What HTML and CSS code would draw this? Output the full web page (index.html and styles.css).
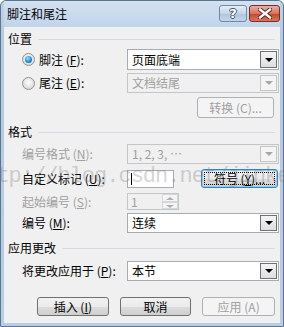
FILE: index.html
```html
<!DOCTYPE html>
<html lang="zh-CN">
<head>
  <meta charset="UTF-8" />
  <title>脚注和尾注</title>
  <link rel="stylesheet" href="styles.css">
</head>
<body>

  <div class="window">
    <div class="titlebar">
      <span class="title">脚注和尾注</span>
      <div class="caption-btns">
        <span class="cap help">?</span>
        <span class="cap close">
          <svg width="14" height="11" viewBox="0 0 14 11">
            <path d="M2 1.5 L12 9.5 M12 1.5 L2 9.5" stroke="#5a1d12" stroke-width="4.2" stroke-linecap="square"/>
            <path d="M2 1.5 L12 9.5 M12 1.5 L2 9.5" stroke="#fff" stroke-width="2.4" stroke-linecap="square"/>
          </svg>
        </span>
      </div>
    </div>

    <div class="client">
      <!-- 位置 -->
      <div class="group-head"><span>位置</span><i></i></div>

      <div class="row row-first">
        <label class="radio"><span class="dot checked"></span>脚注 (<u>F</u>):</label>
        <div class="combo"><span class="value">页面底端</span><span class="drop"></span></div>
      </div>

      <div class="row row-second">
        <label class="radio"><span class="dot"></span>尾注 (<u>E</u>):</label>
        <div class="combo disabled"><span class="value">文档结尾</span><span class="drop"></span></div>
      </div>

      <div class="btn-row">
        <span class="btn disabled btn-wide">转换 (C)...</span>
      </div>

      <!-- 格式 -->
      <div class="group-head head-format"><span>格式</span><i></i></div>

      <div class="row row-numfmt">
        <label class="muted">编号格式 (<u>N</u>):</label>
        <div class="combo disabled"><span class="value">1, 2, 3, …</span><span class="drop"></span></div>
      </div>

      <div class="row row-custom">
        <label>自定义标记 (<u>U</u>):</label>
        <div class="custom-line">
          <div class="textbox"><span class="caret"></span></div>
          <span class="btn btn-wide focused"><span class="focus-rect">符号 (<u>Y</u>)...</span></span>
        </div>
      </div>

      <div class="row row-start">
        <label class="muted">起始编号 (<u>S</u>):</label>
        <div class="spin">
          <span class="spin-value">1</span>
          <span class="spin-btns"><b class="up"></b><b class="down"></b></span>
        </div>
      </div>

      <div class="row row-numbering">
        <label>编号 (<u>M</u>):</label>
        <div class="combo"><span class="value">连续</span><span class="drop"></span></div>
      </div>

      <!-- 应用更改 -->
      <div class="group-head head-apply"><span>应用更改</span><i></i></div>

      <div class="row row-applyto">
        <label>将更改应用于 (<u>P</u>):</label>
        <div class="combo"><span class="value">本节</span><span class="drop"></span></div>
      </div>

      <div class="footer">
        <span class="btn">插入 (<u>I</u>)</span>
        <span class="btn">取消</span>
        <span class="btn disabled btn-apply">应用 (A)</span>
      </div>
    </div>

    <div class="watermark">http://blog.csdn.net/jinke.h</div>
  </div>

</body>
</html>
```

FILE: styles.css
```css
:root {
  --frame: #bfd2e8;
  --frame-dark: #5c7591;
  --face: #f0f0f0;
  --text: #000000;
  --muted: #a0a0a0;
  --edge: #a5acb5;
  --edge-off: #c3c6c9;
  --line: #d3dce4;
}

* {
  box-sizing: border-box;
  margin: 0;
  padding: 0;
}

body {
  background: #ffffff;
  font-family: "Noto Sans CJK SC", "Liberation Sans", sans-serif;
  font-size: 12px;
  color: var(--text);
}

u {
  text-decoration: underline;
  text-underline-offset: 1px;
}

.window {
  position: relative;
  width: 284px;
  height: 327px;
  border: 1px solid var(--frame-dark);
  border-radius: 6px 6px 0 0;
  background: linear-gradient(var(--frame), #b4c9e2 40px, #b9cde4);
  padding: 0 3px 3px 3px;
  display: flex;
  flex-direction: column;
  overflow: hidden;
}

/* Title bar */
.titlebar {
  height: 26px;
  flex: none;
  display: flex;
  align-items: center;
  padding: 0 0 1px 3px;
  background: linear-gradient(#d3e1f1, #c1d4ea);
}

.title {
  font-size: 12px;
  line-height: 14px;
  color: #000;
  padding-top: 1px;
}

.caption-btns {
  margin-left: auto;
  display: flex;
  gap: 2px;
  align-self: flex-start;
  margin-top: 4px;
}

.cap {
  height: 17px;
  border-radius: 3px;
  display: flex;
  align-items: center;
  justify-content: center;
}

.help {
  width: 28px;
  border: 1px solid #6f8aa7;
  background: linear-gradient(#e6eef7, #c4d4e6 50%, #b0c5dc 51%, #c3d5ea);
  color: #fff;
  font-family: "DejaVu Sans", sans-serif;
  font-weight: bold;
  font-size: 13px;
  text-shadow: 1px 0 #3d5270, -1px 0 #3d5270, 0 1px #3d5270, 0 -1px #3d5270;
}

.close {
  width: 31px;
  border: 1px solid #7a2d20;
  background: linear-gradient(#e8b2a4, #d7725c 50%, #c4452d 51%, #d9765b);
}

/* Client area */
.client {
  flex: 1;
  background: var(--face);
  padding: 5px 5px 0 4px;
  display: flex;
  flex-direction: column;
}

.group-head {
  height: 14px;
  display: flex;
  align-items: center;
  line-height: 14px;
}

.group-head i {
  flex: 1;
  height: 1px;
  margin-left: 6px;
  background: var(--line);
}

.head-format { margin-top: 7px; }
.head-apply { margin-top: 8px; }

.row {
  display: grid;
  grid-template-columns: 105px 152px;
  align-items: center;
  padding-left: 14px;
  height: 20px;
}

.row label {
  line-height: 14px;
  white-space: nowrap;
}

.row-first { margin-top: 3px; height: 21px; }
.row-second { margin-top: 3px; }
.row-numfmt { margin-top: 5px; }
.row-custom { margin-top: 5px; height: 19px; }
.row-start { margin-top: 5px; height: 17px; }
.row-numbering { margin-top: 3px; }
.row-applyto { margin-top: 6px; }

.muted {
  color: var(--muted);
}

/* Radio buttons */
.radio {
  display: flex;
  align-items: center;
}

.dot {
  width: 13px;
  height: 13px;
  border-radius: 50%;
  border: 1px solid #8f9294;
  background: radial-gradient(circle at 50% 40%, #ffffff, #dcdcdc 70%, #c8c8c8);
  margin-right: 4px;
  position: relative;
}

.dot.checked::after {
  content: "";
  position: absolute;
  left: 2px;
  top: 2px;
  width: 7px;
  height: 7px;
  border-radius: 50%;
  background: radial-gradient(circle at 40% 35%, #9fe0ff, #1e8fd6 55%, #0b4f96);
}

/* Combo boxes */
.combo {
  height: 100%;
  border: 1px solid var(--edge);
  background: #ffffff;
  display: flex;
  align-items: center;
  padding: 1px 1px 1px 4px;
}

.combo .value {
  flex: 1;
  line-height: 14px;
  white-space: nowrap;
}

.drop {
  width: 17px;
  height: 100%;
  border: 1px solid #707070;
  background: linear-gradient(#f4f4f4, #dedede);
  position: relative;
}

.drop::after {
  content: "";
  position: absolute;
  left: 4px;
  top: 50%;
  margin-top: -2px;
  border-left: 4px solid transparent;
  border-right: 4px solid transparent;
  border-top: 4px solid #000;
}

.combo.disabled {
  border-color: var(--edge-off);
  background: var(--face);
  color: var(--muted);
}

.combo.disabled .drop {
  border-color: var(--edge-off);
  background: #f4f4f4;
}

.combo.disabled .drop::after {
  border-top-color: #a8a8a8;
}

/* Push buttons */
.btn {
  height: 19px;
  width: 73px;
  border: 1px solid #707070;
  border-radius: 3px;
  background: linear-gradient(#f2f2f2, #ebebeb 50%, #dddddd 51%, #cfcfcf);
  display: flex;
  align-items: center;
  justify-content: center;
  line-height: 14px;
  white-space: nowrap;
}

.btn.disabled {
  border-color: #adb2b5;
  background: #f4f4f4;
  color: var(--muted);
}

.btn-wide {
  width: 77px;
}

.btn-row {
  margin-top: 4px;
  height: 21px;
  display: flex;
  justify-content: flex-end;
  padding-right: 1px;
}

.btn-row .btn {
  height: 21px;
}

.btn.focused {
  border-color: #3c7fb1;
  box-shadow: inset 0 0 0 1px #8ad2f9;
  padding: 2px;
}

.focus-rect {
  flex: 1;
  align-self: stretch;
  display: flex;
  align-items: center;
  justify-content: center;
  outline: 1px dotted #000;
  outline-offset: -1px;
}

/* Custom mark row */
.custom-line {
  display: flex;
  align-items: center;
  height: 100%;
  width: 157px;
  gap: 27px;
}

.textbox {
  width: 47px;
  height: 18px;
  border: 1px solid var(--edge);
  background: #ffffff;
  padding: 2px 3px;
  display: flex;
}

.caret {
  width: 1px;
  background: #000;
}

/* Spinner */
.spin {
  width: 52px;
  height: 100%;
  border: 1px solid var(--edge-off);
  background: var(--face);
  display: flex;
  color: var(--muted);
}

.spin-value {
  flex: 1;
  padding-left: 3px;
  line-height: 15px;
}

.spin-btns {
  width: 16px;
  display: flex;
  flex-direction: column;
}

.spin-btns b {
  flex: 1;
  border: 1px solid #d4d6d8;
  background: #f4f4f4;
  position: relative;
}

.spin-btns b::after {
  content: "";
  position: absolute;
  left: 3px;
  top: 2px;
  border-left: 4px solid transparent;
  border-right: 4px solid transparent;
}

.spin-btns .up::after { border-bottom: 3px solid #b0b0b0; }
.spin-btns .down::after { border-top: 3px solid #b0b0b0; }

/* Footer */
.footer {
  margin-top: 16px;
  display: flex;
  padding-left: 29px;
  gap: 11px;
}

.btn-apply {
  width: 74px;
}

/* Watermark lies over the whole dialog */
.watermark {
  position: absolute;
  left: -29px;
  top: 163px;
  font-family: "Liberation Mono", monospace;
  font-size: 22px;
  letter-spacing: -1px;
  color: rgba(120, 120, 120, 0.33);
  white-space: nowrap;
  pointer-events: none;
}
```
